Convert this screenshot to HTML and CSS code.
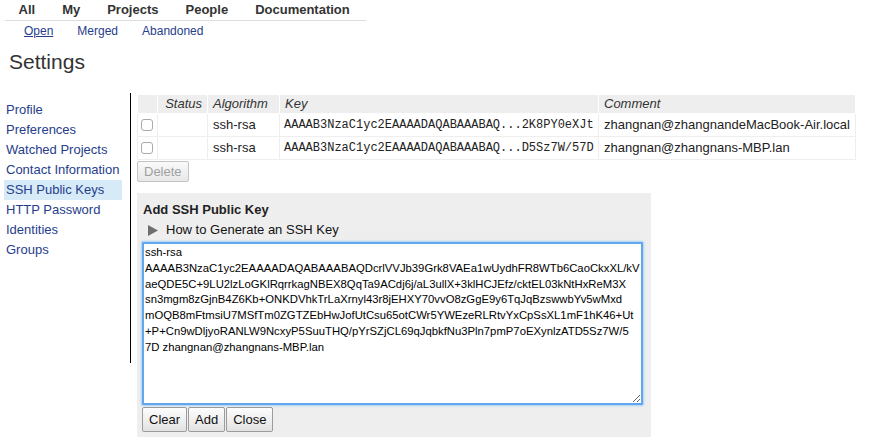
FILE: index.html
```html
<!DOCTYPE html>
<html>
<head>
<meta charset="utf-8">
<title>Settings</title>
<link rel="stylesheet" href="styles.css">
</head>
<body>
<div class="topbar">
  <a class="top-item">All</a>
  <a class="top-item">My</a>
  <a class="top-item">Projects</a>
  <a class="top-item">People</a>
  <a class="top-item">Documentation</a>
</div>
<div class="subbar">
  <a class="sub-item current">Open</a>
  <a class="sub-item">Merged</a>
  <a class="sub-item">Abandoned</a>
</div>
<h1 class="title">Settings</h1>
<div class="main">
  <nav class="sidebar">
    <a class="side-item">Profile</a>
    <a class="side-item">Preferences</a>
    <a class="side-item">Watched Projects</a>
    <a class="side-item">Contact Information</a>
    <a class="side-item active">SSH Public Keys</a>
    <a class="side-item">HTTP Password</a>
    <a class="side-item">Identities</a>
    <a class="side-item">Groups</a>
  </nav>
  <div class="divider"></div>
  <div class="content">
    <table class="keys">
      <colgroup>
        <col class="c-icon"><col class="c-status"><col class="c-alg"><col class="c-key"><col class="c-comment">
      </colgroup>
      <thead>
        <tr><th></th><th class="th-status">Status</th><th>Algorithm</th><th>Key</th><th>Comment</th></tr>
      </thead>
      <tbody>
        <tr>
          <td class="icon"><input type="checkbox" class="check"></td>
          <td></td>
          <td>ssh-rsa</td>
          <td class="mono">AAAAB3NzaC1yc2EAAAADAQABAAABAQ...2K8PY0eXJt</td>
          <td>zhangnan@zhangnandeMacBook-Air.local</td>
        </tr>
        <tr>
          <td class="icon"><input type="checkbox" class="check"></td>
          <td></td>
          <td>ssh-rsa</td>
          <td class="mono">AAAAB3NzaC1yc2EAAAADAQABAAABAQ...D5Sz7W/57D</td>
          <td>zhangnan@zhangnans-MBP.lan</td>
        </tr>
      </tbody>
    </table>
    <button class="btn btn-delete" disabled>Delete</button>
    <div class="panel">
      <div class="panel-title">Add SSH Public Key</div>
      <div class="disclosure">
        <svg class="tri" width="10" height="11" viewBox="0 0 10 11"><polygon points="0,0 10,5.5 0,11" fill="#6e6e6e"/></svg>
        <span>How to Generate an SSH Key</span>
      </div>
      <textarea class="keybox" spellcheck="false">ssh-rsa
AAAAB3NzaC1yc2EAAAADAQABAAABAQDcrlVVJb39Grk8VAEa1wUydhFR8WTb6CaoCkxXL/kV
aeQDE5C+9LU2lzLoGKlRqrrkagNBEX8QqTa9ACdj6j/aL3ullX+3klHCJEfz/cktEL03kNtHxReM3X
sn3mgm8zGjnB4Z6Kb+ONKDVhkTrLaXrnyl43r8jEHXY70vvO8zGgE9y6TqJqBzswwbYv5wMxd
mOQB8mFtmsiU7MSfTm0ZGTZEbHwJofUtCsu65otCWr5YWEzeRLRtvYxCpSsXL1mF1hK46+Ut
+P+Cn9wDljyoRANLW9NcxyP5SuuTHQ/pYrSZjCL69qJqbkfNu3Pln7pmP7oEXynlzATD5Sz7W/5
7D zhangnan@zhangnans-MBP.lan</textarea>
      <div class="actions">
        <button class="btn">Clear</button>
        <button class="btn">Add</button>
        <button class="btn">Close</button>
      </div>
    </div>
  </div>
</div>
</body>
</html>
```
FILE: styles.css
```css
body {
  margin: 0;
  font-family: "Liberation Sans", Arial, sans-serif;
  font-size: 13px;
  color: #222;
  background: #fff;
}

.topbar {
  display: flex;
  margin-left: 5px;
  width: 361px;
  height: 19px;
  padding-top: 1px;
  line-height: 18px;
  border-bottom: 1px solid #ddd;
}

.top-item {
  padding: 0 13.5px;
  font-weight: bold;
  color: #333;
  text-decoration: none;
}

.subbar {
  display: flex;
  margin-left: 12px;
  padding-top: 1px;
  line-height: 18px;
  font-size: 12px;
}

.sub-item {
  padding: 0 12px;
  color: #263d8c;
  text-decoration: none;
}

.sub-item.current {
  text-decoration: underline;
}

.title {
  margin: 9px 0 0 9px;
  font-size: 21px;
  font-weight: normal;
  line-height: 26px;
  color: #333;
}

.main {
  display: flex;
  align-items: flex-start;
  margin-top: 19px;
}

.sidebar {
  display: flex;
  flex-direction: column;
  width: 118px;
  margin-left: 4px;
  padding-top: 6px;
}

.side-item {
  line-height: 20px;
  padding-left: 2px;
  color: #263d8c;
  text-decoration: none;
}

.side-item.active {
  background: #d6eaf8;
}

.divider {
  width: 1px;
  height: 270px;
  margin-left: 8px;
  margin-top: -1px;
  background: #000;
}

.content {
  margin-left: 6px;
}

.keys {
  border-collapse: collapse;
  table-layout: fixed;
  width: 718px;
}

.c-icon { width: 20px; }
.c-status { width: 50px; }
.c-alg { width: 72px; }
.c-key { width: 319px; }
.c-comment { width: 257px; }

.keys th {
  background: #eee;
  border: 1px solid #fff;
  font-style: italic;
  font-weight: normal;
  text-align: left;
  color: #333;
  padding: 1px 5px;
  line-height: 16px;
}

.keys th.th-status {
  text-align: right;
}

.keys td {
  border: 1px solid #eee;
  padding: 3px 5px;
  line-height: 16px;
  white-space: nowrap;
  overflow: hidden;
}

.keys td.icon {
  padding: 3px 3px;
}

.keys td.mono {
  font-family: "Liberation Mono", "Courier New", monospace;
  font-size: 12px;
  padding-left: 4px;
}

.check {
  appearance: none;
  -webkit-appearance: none;
  display: block;
  width: 12px;
  height: 12px;
  margin: 0;
  border: 1px solid #aaa;
  border-radius: 3px;
  background: #fff;
  box-sizing: border-box;
}

.btn {
  height: 25px;
  padding: 0 6px;
  font-family: "Liberation Sans", Arial, sans-serif;
  font-size: 13px;
  color: #111;
  border: 1px solid #9c9c9c;
  border-radius: 2px;
  background: linear-gradient(#fdfdfd, #e2e2e2);
}

.btn-delete {
  display: block;
  height: 21px;
  margin-top: 1px;
  color: #a0a0a0;
  border-color: #c4c4c4;
  background: linear-gradient(#fafafa, #e8e8e8);
}

.panel {
  width: 514px;
  box-sizing: border-box;
  margin-top: 11px;
  padding: 9px 0 5px 5px;
  background: #eee;
}

.panel-title {
  margin-left: 1px;
  font-weight: bold;
  line-height: 16px;
  color: #222;
}

.disclosure {
  display: flex;
  align-items: center;
  gap: 8px;
  margin-top: 4px;
  padding-left: 6px;
  line-height: 16px;
  color: #111;
}

.keybox {
  display: block;
  width: 501px;
  height: 163px;
  box-sizing: border-box;
  margin: 4px 0 0 0;
  padding: 1px 1px;
  border: 2px solid #62a6ee;
  border-radius: 1px;
  box-shadow: 0 0 2px 1px #a8d0f7;
  font-family: "Liberation Sans", Arial, sans-serif;
  font-size: 11.3px;
  line-height: 15.8px;
  color: #000;
  background: #fff;
  white-space: pre;
  overflow: hidden;
  outline: none;
}

.actions {
  display: flex;
  gap: 1px;
  margin-top: 2px;
}
```
